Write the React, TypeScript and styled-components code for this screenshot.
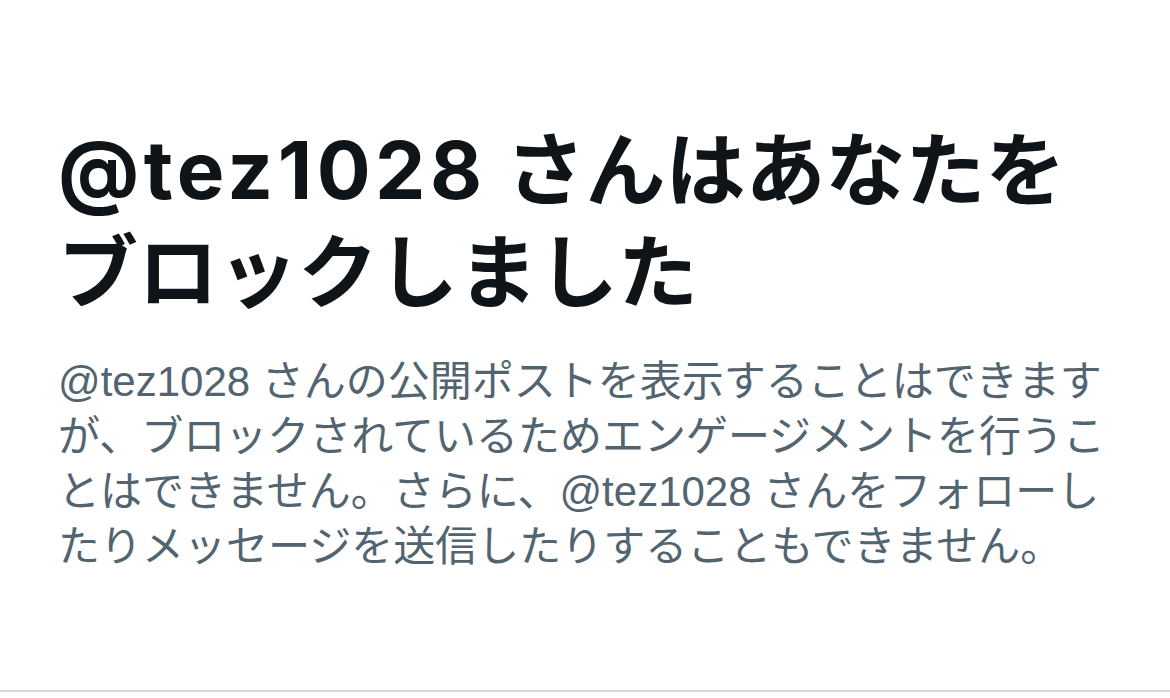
import React from 'react'
import styled, { createGlobalStyle } from 'styled-components'

const GlobalStyle = createGlobalStyle`
  html, body {
    margin: 0;
    padding: 0;
    background: #ffffff;
  }

  body {
    font-family: Inter, 'Noto Sans CJK JP', sans-serif;
    -webkit-font-smoothing: antialiased;
  }
`

const Screen = styled.div`
  width: 1170px;
  height: 698px;
  display: flex;
  flex-direction: column;
  background: #ffffff;
`

const Panel = styled.section`
  box-sizing: border-box;
  height: 692px;
  padding: 119px 40px 0 58px;
  border-bottom: 2px solid #d6d6d6;
`

const Title = styled.h1`
  margin: 0;
  color: #0f1419;
  font-family: Inter, 'Noto Sans CJK JP', sans-serif;
  font-size: 80px;
  font-weight: 700;
  line-height: 102px;
`

const Handle = styled.span<{ $spacing: number }>`
  letter-spacing: ${(props) => props.$spacing}px;
`

const Body = styled.p`
  margin: 31px 0 0;
  width: 1070px;
  color: #536471;
  font-family: 'Liberation Sans', 'Noto Sans CJK JP', sans-serif;
  font-size: 42px;
  font-weight: 400;
  line-height: 55px;
  line-break: strict;
`

const handle = '@tez1028'

export default function App() {
  return (
    <>
      <GlobalStyle />
      <Screen>
        <Panel>
          <Title>
            <Handle $spacing={4.5}>{handle}</Handle> さんはあなたを
            <br />
            ブロックしました
          </Title>
          <Body>
            {handle} さんの公開ポストを表示することはできますが、ブロックされているためエンゲージメントを行うことはできません。さらに、{handle} さんをフォローしたりメッセージを送信したりすることもできません。
          </Body>
        </Panel>
      </Screen>
    </>
  )
}
